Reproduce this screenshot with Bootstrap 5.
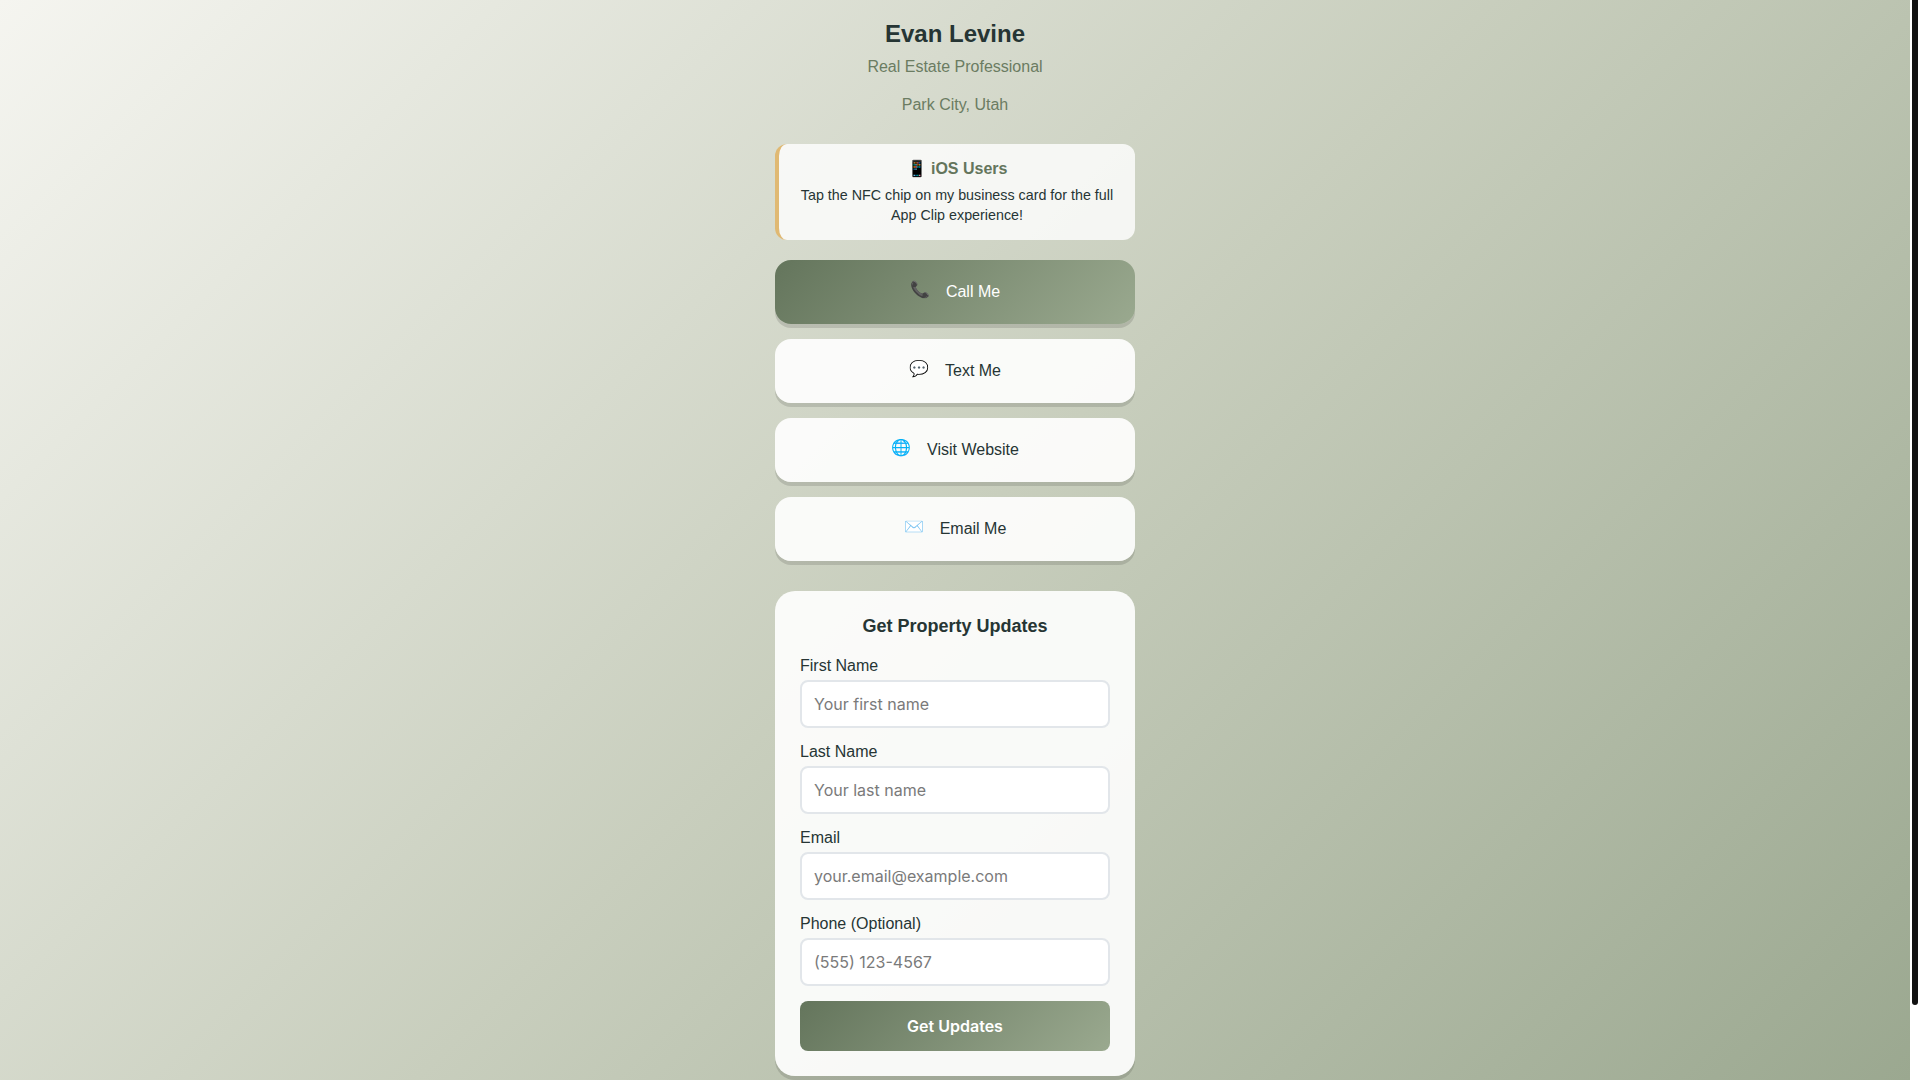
<!DOCTYPE html>
<html lang="en">

<head>
  <meta charset="UTF-8" />
  <meta name="viewport" content="width=device-width, initial-scale=1" />
  <title>Evan Levine - Real Estate Professional</title>
  <link href="https://cdn.jsdelivr.net/npm/bootstrap@5.3.2/dist/css/bootstrap.min.css" rel="stylesheet" />
  <style>
    html,
    body {
      height: 100%;
      overflow: hidden;
    }

    body {
      font-family: "Liberation Sans", Arial, sans-serif;
      color: #263534;
      background: #fff;
      line-height: 1.2;
    }

    .page-scroller {
      height: 100vh;
      overflow-y: auto;
      scrollbar-width: none;
      background: linear-gradient(135deg, #f5f5f0 0%, #c8cebd 50%, #9ba890 100%);
    }

    .scroll-rail {
      flex: 0 0 10px;
      padding: 0 2px;
      background: #fff;
    }

    .scroll-thumb {
      height: 1005px;
      background: #111;
      border-radius: 0 0 3px 3px;
    }

    .page-column {
      width: 360px;
      margin: 0 auto;
      padding: 20px 0 84px;
    }

    .profile-name {
      font-size: 24px;
      font-weight: 700;
      line-height: 27px;
      margin: 0 0 11px;
    }

    .profile-line {
      font-size: 16px;
      line-height: 18px;
      color: #6b7c62;
      margin: 0 0 20px;
    }

    .profile-line:last-child {
      margin-bottom: 30px;
    }

    .ios-note {
      background: rgba(255, 255, 255, .8);
      border-left: 4px solid #e0b973;
      border-radius: 12px;
      padding: 16px 20px 15px;
      margin-bottom: 20px;
      font-size: 14.3px;
      line-height: 20px;
    }

    .ios-title {
      font-size: 16px;
      font-weight: 700;
      line-height: 18px;
      color: #64755c;
      margin-bottom: 7px;
    }

    .action-btn {
      height: 64px;
      border: 0;
      border-radius: 16px;
      margin-bottom: 15px;
      background: rgba(255, 255, 255, .9);
      box-shadow: 0 4px 0 rgba(0, 0, 0, .12);
      color: #263534;
      font-size: 16px;
      gap: 16px;
    }

    .action-btn:hover {
      background: #fff;
      color: #263534;
    }

    .action-btn.primary-action,
    .submit-btn {
      background: linear-gradient(135deg, #64755c, #9aa98f);
      color: #fff;
    }

    .emoji-icon {
      font-size: 16px;
      line-height: 1;
      margin-bottom: 5px;
    }

    .lead-form {
      background: rgba(255, 255, 255, .9);
      border-radius: 20px;
      box-shadow: 0 4px 0 rgba(0, 0, 0, .12);
      margin-top: 30px;
      padding: 25px;
    }

    .lead-form h2 {
      font-size: 18px;
      font-weight: 700;
      line-height: 21px;
      text-align: center;
      margin: 0 0 20px;
    }

    .field-label {
      display: block;
      font-size: 16px;
      line-height: 18px;
      margin-bottom: 5px;
    }

    .field-input {
      height: 48px;
      border: 2px solid #e2e6ea;
      border-radius: 8px;
      font-family: Inter, sans-serif;
      font-size: 16px;
      padding: 0 12px;
      margin-bottom: 15px;
    }

    .field-input::placeholder {
      color: #7a7a7a;
    }

    .submit-btn {
      height: 50px;
      border: 0;
      border-radius: 8px;
      font-family: Inter, sans-serif;
      font-size: 16px;
      font-weight: 600;
    }
  </style>
</head>

<body class="d-flex">
  <div class="page-scroller flex-grow-1">
    <div class="page-column">
      <header class="text-center">
        <h1 class="profile-name">Evan Levine</h1>
        <p class="profile-line">Real Estate Professional</p>
        <p class="profile-line">Park City, Utah</p>
      </header>

      <div class="ios-note text-center">
        <div class="ios-title">📱 iOS Users</div>
        <div>Tap the NFC chip on my business card for the full App Clip experience!</div>
      </div>

      <a href="#" class="btn action-btn primary-action d-flex align-items-center justify-content-center">
        <span class="emoji-icon">📞</span><span>Call Me</span>
      </a>
      <a href="#" class="btn action-btn d-flex align-items-center justify-content-center">
        <span class="emoji-icon">💬</span><span>Text Me</span>
      </a>
      <a href="#" class="btn action-btn d-flex align-items-center justify-content-center">
        <span class="emoji-icon">🌐</span><span>Visit Website</span>
      </a>
      <a href="#" class="btn action-btn d-flex align-items-center justify-content-center">
        <span class="emoji-icon">✉️</span><span>Email Me</span>
      </a>

      <form class="lead-form">
        <h2>Get Property Updates</h2>
        <label class="field-label" for="firstName">First Name</label>
        <input class="form-control field-input" id="firstName" type="text" placeholder="Your first name" />
        <label class="field-label" for="lastName">Last Name</label>
        <input class="form-control field-input" id="lastName" type="text" placeholder="Your last name" />
        <label class="field-label" for="email">Email</label>
        <input class="form-control field-input" id="email" type="email" placeholder="your.email@example.com" />
        <label class="field-label" for="phone">Phone (Optional)</label>
        <input class="form-control field-input" id="phone" type="tel" placeholder="(555) 123-4567" />
        <button type="button" class="btn submit-btn w-100">Get Updates</button>
      </form>
    </div>
  </div>
  <div class="scroll-rail">
    <div class="scroll-thumb"></div>
  </div>

  <script src="https://cdn.jsdelivr.net/npm/bootstrap@5.3.2/dist/js/bootstrap.bundle.min.js"></script>
</body>

</html>
